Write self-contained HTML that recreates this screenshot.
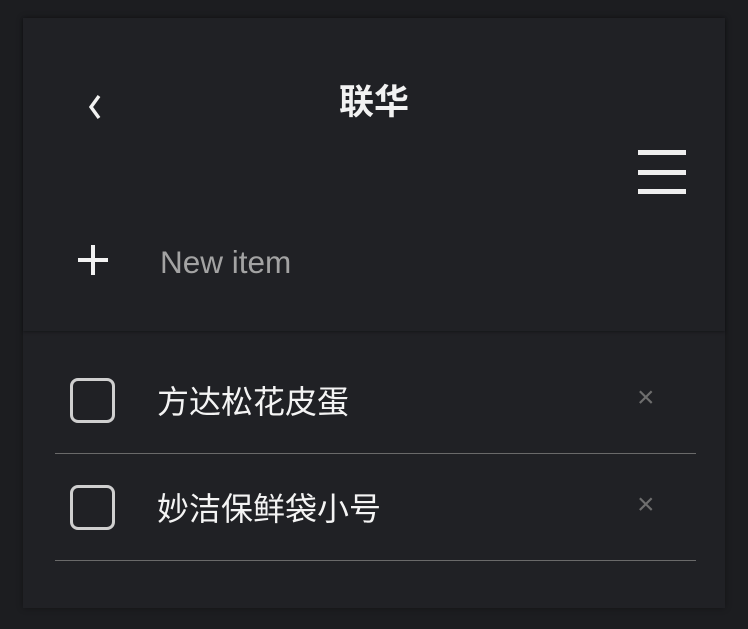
<!DOCTYPE html>
<html><head><meta charset="utf-8"><style>
html,body{margin:0;padding:0;width:748px;height:629px;background:#1c1d20;overflow:hidden;font-family:"Liberation Sans","Noto Sans CJK SC",sans-serif;}
.card{position:absolute;left:23px;top:18px;width:702px;height:590px;background:#202125;box-shadow:0 0 6px rgba(0,0,0,.35);}
.hdr{position:absolute;left:0;top:0;width:702px;height:313px;box-shadow:0 1px 3px rgba(0,0,0,.35);}
.abs{position:absolute;}
.title{left:0;width:702px;top:65px;text-align:center;font-size:35px;font-weight:bold;color:#f2f2f2;line-height:40px;}
.bar{position:absolute;left:615px;width:48px;height:5px;background:#eee;}
.new{left:137px;top:225px;font-size:31.5px;color:#a3a3a3;line-height:38px;}
.cb{position:absolute;left:47px;width:39px;height:39px;border:3px solid #cfcfcf;border-radius:8px;}
.it{position:absolute;left:134px;font-size:32px;color:#f4f4f4;line-height:40px;}
.x{position:absolute;left:614px;font-size:30px;color:#6e6e6e;line-height:30px;}
.ln{position:absolute;left:32px;width:641px;height:1px;background:#6a6a6a;}
</style></head><body>
<div class="card">
<div class="hdr">
<svg class="abs" style="left:62px;top:74px" width="24" height="30" viewBox="0 0 24 30"><path d="M14 4 L6 15 L14 26" fill="none" stroke="#f2f2f2" stroke-width="3.4"/></svg>
<div class="abs title">联华</div>
<div class="bar" style="top:132px"></div>
<div class="bar" style="top:152px"></div>
<div class="bar" style="top:171px"></div>
<svg class="abs" style="left:53px;top:226px" width="34" height="34"><rect x="2" y="14" width="30" height="4" fill="#f2f2f2"/><rect x="15" y="1" width="4" height="30" fill="#f2f2f2"/></svg>
<div class="abs new">New item</div>
</div>
<div class="cb" style="top:360px"></div>
<div class="it" style="top:364px">方达松花皮蛋</div>
<div class="x" style="top:365px">×</div>
<div class="ln" style="top:435px"></div>
<div class="cb" style="top:467px"></div>
<div class="it" style="top:471px">妙洁保鲜袋小号</div>
<div class="x" style="top:472px">×</div>
<div class="ln" style="top:542px"></div>
</div>
</body></html>
